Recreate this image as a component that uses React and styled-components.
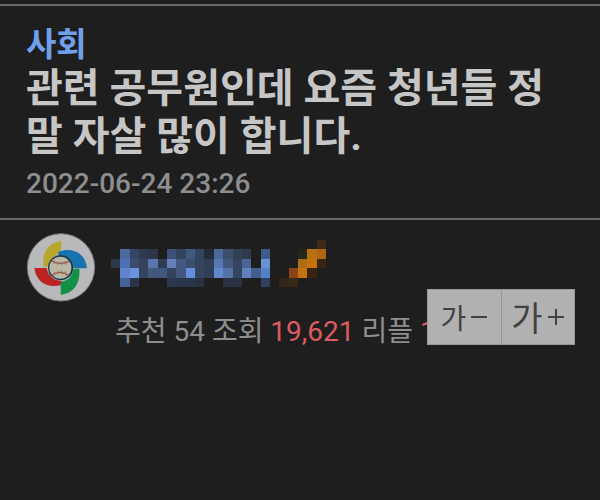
import styled, { createGlobalStyle } from "styled-components";

const GlobalStyle = createGlobalStyle`
  * {
    box-sizing: border-box;
  }
  body {
    margin: 0;
    background-color: #1e1e1e;
    color: #8e8e8e;
    font-family: Roboto, "Noto Sans CJK KR", sans-serif;
  }
`;

const BLOCK = 28;

// one string per row: "-" is an empty block
const nicknameRows = [
  "- - - - - - - - - - - - - - - - - - - - - - 3a2a17",
  "- 4a6a9f 354764 2d3a50 2b3648 - 3b4f78 33435c 41597f 33445c 242c38 4a6a9c 3c4e6c 333f55 2f3a4c - 405a8c - - - 252614 b87016 b0660f",
  "2b374a 4d72b4 3a4b6c 33425a 5876ac 2f3c50 667fbc 42587f 3a4f6c 33445c 2f3f57 5877b2 42587b 36455f 4c6496 - 6c92d6 - - - b06e14 c4720c 3a2414",
  "- 5f84cc 6a94e0 33445c 41587c 41587c 33435c 42587f 668ede 33445c 2f3f57 6288cc 5474a8 36455f 6080be 42608f 5580c8 - - 8c4218 c27210 39250f -",
  "- 446398 2b3546 - - - 2b3850 29364a 29364a 27313f - - 283240 283240 - - 2f3f5c - 35261a 3b2917 - - -",
].map((row) => row.split(" "));

const Nickname = () => {
  return (
    <NicknameArt viewBox={`0 0 ${BLOCK * 23} ${BLOCK * 5}`} shapeRendering="crispEdges" aria-hidden="true">
      {nicknameRows.map((row, y) =>
        row.map((color, x) =>
          color === "-" ? null : (
            <rect key={`${x}-${y}`} x={x * BLOCK} y={y * BLOCK} width={BLOCK} height={BLOCK} fill={`#${color}`} />
          )
        )
      )}
    </NicknameArt>
  );
};

const TeamLogo = () => {
  return (
    <LogoArt viewBox="0 0 210 210" aria-hidden="true">
      <circle cx="105" cy="103" r="101" fill="#b9b9bc" stroke="#77797c" strokeWidth="3" />
      <path d="M107 24 C72 28 46 52 53 102 L72 100 C74 80 82 66 100 62 L105 48 Z" fill="#b8a72c" />
      <path d="M97 57 C135 42 178 56 183 106 L143 106 C140 82 124 66 97 66 Z" fill="#1973ae" />
      <path d="M160 107 C164 152 142 181 104 185 L104 146 C125 144 140 130 143 107 Z" fill="#139047" />
      <path d="M25 105 L62 105 C66 126 80 142 106 144 L104 157 C60 167 30 144 25 105 Z" fill="#bb2422" />
      <circle cx="104" cy="104" r="38" fill="#19394e" />
      <circle cx="103" cy="104" r="33" fill="#b9b8a4" />
      <path d="M77 84 Q103 98 129 85 M78 126 Q103 110 128 127" fill="none" stroke="#965249" strokeWidth="4" />
      <path d="M86 82 l-2 11 M96 85 l-1 11 M106 86 l1 10 M117 84 l3 11 M86 117 l-2 11 M96 113 l-1 11 M107 113 l1 11 M117 115 l3 11" stroke="#a56c60" strokeWidth="3" />
    </LogoArt>
  );
};

const App = () => {
  return (
    <>
      <GlobalStyle />
      <Page>
        <PostHeader>
          <Category href="#society">사회</Category>
          <Title>관련 공무원인데 요즘 청년들 정말 자살 많이 합니다.</Title>
          <PostDate>2022-06-24 23:26</PostDate>
        </PostHeader>
        <Author>
          <TeamLogo />
          <AuthorInfo>
            <Nickname />
            <Stats>
              추천 54 조회 <Count>19,621</Count> 리플 <Count>1</Count>
            </Stats>
          </AuthorInfo>
          <FontSizeControl role="group" aria-label="글자 크기">
            <FontButton type="button" $size={28}>
              가
              <Sign viewBox="0 0 18 18" aria-hidden="true">
                <path d="M1 9 H17" />
              </Sign>
            </FontButton>
            <FontButton type="button" $size={34}>
              가
              <Sign viewBox="0 0 18 18" aria-hidden="true">
                <path d="M1 9 H17 M9 1 V17" />
              </Sign>
            </FontButton>
          </FontSizeControl>
        </Author>
      </Page>
    </>
  );
};

const Page = styled.main`
  padding-top: 4px;
`;

const PostHeader = styled.header`
  display: flex;
  flex-direction: column;
  align-items: flex-start;
  padding: 20px 26px 14px;
  border-top: 2px solid #6b6b6b;
  border-bottom: 2px solid #6b6b6b;
`;

const Category = styled.a`
  color: #70a0ec;
  font-size: 33px;
  font-weight: 700;
  line-height: 38px;
  text-decoration: none;
`;

const Title = styled.h1`
  margin: 1px 0 3px;
  color: #c6c6c6;
  font-size: 40px;
  font-weight: 700;
  line-height: 48px;
  word-break: break-all;
`;

const PostDate = styled.time`
  font-size: 28px;
  font-weight: 500;
  line-height: 40px;
`;

const Author = styled.section`
  position: relative;
  display: flex;
  align-items: flex-start;
  gap: 15px;
  padding: 13px 26px;
`;

const LogoArt = styled.svg`
  flex: none;
  width: 70px;
  height: 70px;
`;

const AuthorInfo = styled.div`
  display: flex;
  flex-direction: column;
  gap: 25px;
  padding-top: 7px;
`;

const NicknameArt = styled.svg`
  width: 215px;
  height: 47px;
`;

const Stats = styled.p`
  margin: 0;
  padding-left: 4px;
  font-size: 28px;
  line-height: 40px;
  white-space: nowrap;
`;

const Count = styled.span`
  color: #db5b60;
`;

// floats over the end of the stats line
const FontSizeControl = styled.div`
  position: absolute;
  top: 69px;
  right: 25px;
  display: flex;
  border: 1px solid #999999;
`;

const FontButton = styled.button`
  display: flex;
  align-items: center;
  justify-content: center;
  gap: 4px;
  width: 73px;
  height: 54px;
  padding: 0;
  border: none;
  background-color: #b1b1b1;
  color: #424242;
  font-family: "Noto Sans CJK KR", sans-serif;
  font-size: ${({ $size }) => $size}px;
  line-height: 1;

  & + & {
    border-left: 1px solid #969696;
  }
`;

const Sign = styled.svg`
  width: 18px;
  height: 18px;
  fill: none;
  stroke: #424242;
  stroke-width: 2;
`;

export default App;
